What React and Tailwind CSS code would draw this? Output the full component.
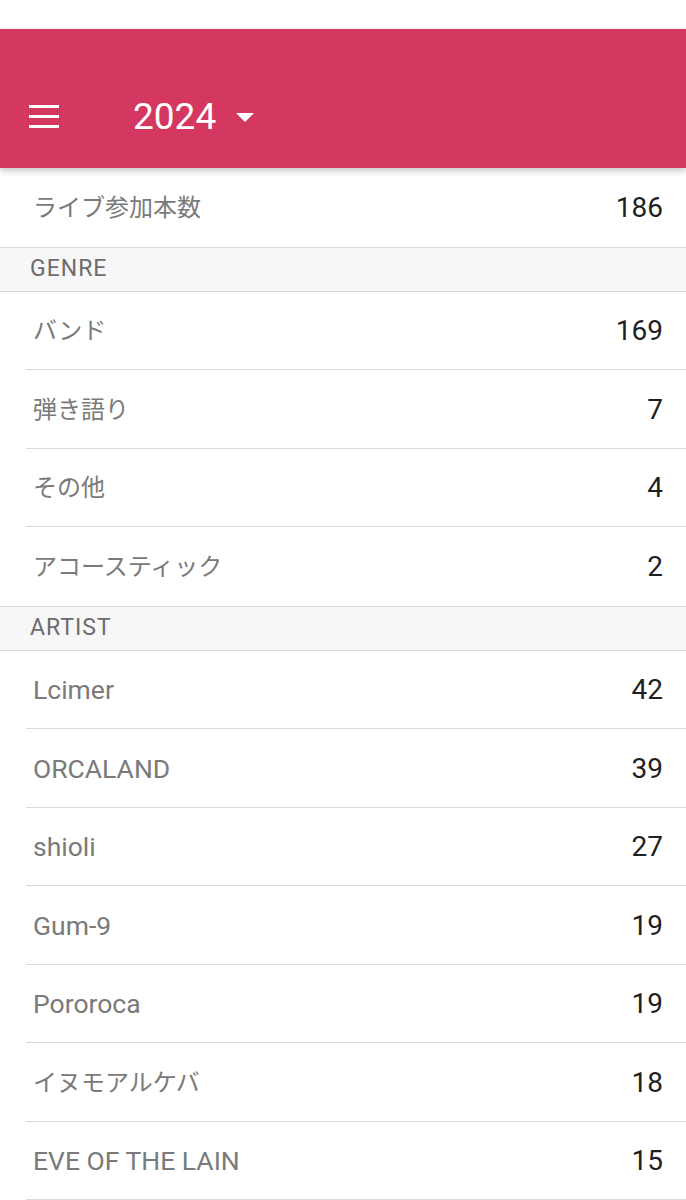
import React from "react";

const genres = [
  { name: "バンド", count: 169, jp: true },
  { name: "弾き語り", count: 7, jp: true },
  { name: "その他", count: 4, jp: true },
  { name: "アコースティック", count: 2, jp: true },
];

const artists = [
  { name: "Lcimer", count: 42 },
  { name: "ORCALAND", count: 39 },
  { name: "shioli", count: 27 },
  { name: "Gum-9", count: 19 },
  { name: "Pororoca", count: 19 },
  { name: "イヌモアルケバ", count: 18, jp: true },
  { name: "EVE OF THE LAIN", count: 15 },
];

function Row({ name, count, jp, last }) {
  return (
    <div className="h-[78.5px] flex flex-col">
      <div className="flex-1 flex items-center justify-between pl-[33px] pr-[23px] pt-[2px]">
        <span
          className={`text-[#7a7a7a] ${jp ? "text-[24px]" : "text-[26.5px]"}`}
        >
          {name}
        </span>
        <span className="text-[28px] text-[#1f1f1f]">{count}</span>
      </div>
      {!last && <div className="ml-[26px] border-b border-[#d9d9d9]" />}
    </div>
  );
}

function SectionHeader({ title }) {
  return (
    <div className="h-[45px] flex items-center bg-[#f7f7f7] border-y border-[#d9d9d9] pl-[30px]">
      <span className="text-[23px] tracking-[1px] text-[#6b6b70]">{title}</span>
    </div>
  );
}

export default function App() {
  return (
    <div
      className="w-[686px] h-[1200px] overflow-hidden bg-white"
      style={{ fontFamily: 'Roboto, "Noto Sans CJK JP", sans-serif' }}
    >
      <div className="h-[29px] bg-white" />
      {/* App bar */}
      <div className="relative z-10 h-[139px] bg-[#d4375f] shadow-[0_3px_6px_rgba(0,0,0,0.22)] pt-[59px]">
        <div className="h-[56px] flex items-center">
          <div className="ml-[29px] w-[30px] flex flex-col gap-[7px]">
            <span className="block h-[3px] bg-white" />
            <span className="block h-[3px] bg-white" />
            <span className="block h-[3px] bg-white" />
          </div>
          <div className="ml-[74px] flex items-center">
            <span className="text-[37px] text-white leading-none">2024</span>
            <svg width="18" height="9" viewBox="0 0 18 9" className="ml-[20px] mt-[2px]">
              <polygon points="0,0 18,0 9,9" fill="white" />
            </svg>
          </div>
        </div>
      </div>

      {/* Total */}
      <Row name="ライブ参加本数" count={186} jp last />

      <SectionHeader title="GENRE" />
      {genres.map((g, i) => (
        <Row key={g.name} {...g} last={i === genres.length - 1} />
      ))}

      <SectionHeader title="ARTIST" />
      {artists.map((a) => (
        <Row key={a.name} {...a} />
      ))}
    </div>
  );
}
